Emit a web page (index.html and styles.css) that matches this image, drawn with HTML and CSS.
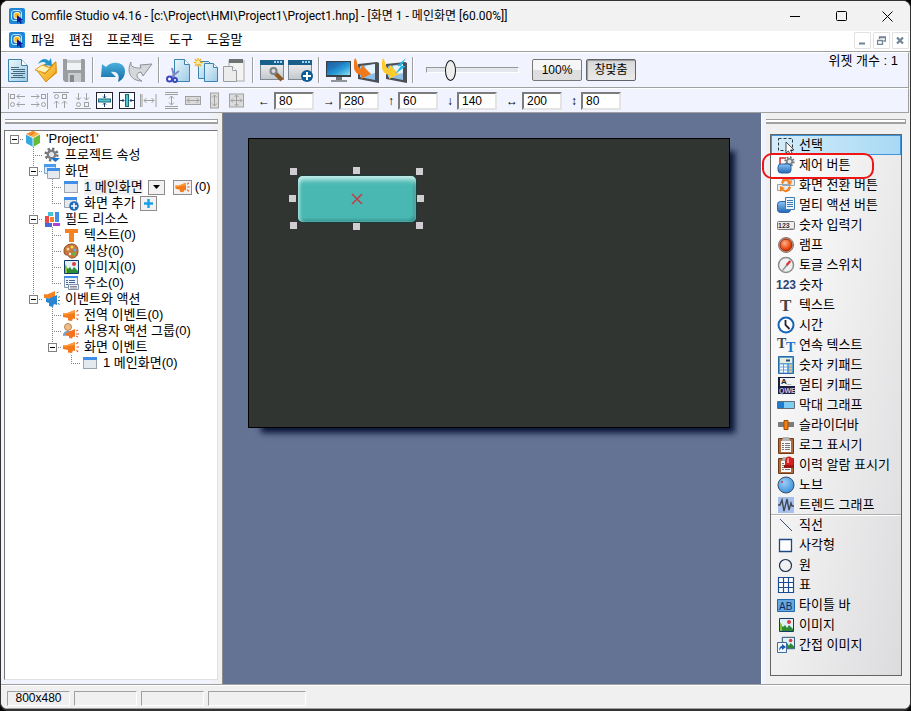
FILE: index.html
```html
<!DOCTYPE html>
<html lang="ko">
<head>
  <meta charset="UTF-8">
  <meta name="viewport" content="width=device-width, initial-scale=1.0">
  <title>Comfile Studio v4.16</title>
  <link rel="stylesheet" href="styles.css">
</head>
<body>
  <svg class="defs" aria-hidden="true">
    <defs>
      <linearGradient id="gPaper" x1="0" y1="0" x2="1" y2="1"><stop offset="0" stop-color="#eaf6fc"/><stop offset="1" stop-color="#9ccbe6"/></linearGradient>
      <linearGradient id="gGold" x1="0" y1="0" x2="1" y2="1"><stop offset="0" stop-color="#ffe27a"/><stop offset="1" stop-color="#f0a010"/></linearGradient>
      <linearGradient id="gGrey" x1="0" y1="0" x2="0" y2="1"><stop offset="0" stop-color="#f4f4f4"/><stop offset="1" stop-color="#c4c7ca"/></linearGradient>
      <linearGradient id="gBlue" x1="0" y1="0" x2="0" y2="1"><stop offset="0" stop-color="#8cc4f4"/><stop offset="1" stop-color="#2468b4"/></linearGradient>
      <linearGradient id="gUndo" x1="0" y1="0" x2="0" y2="1"><stop offset="0" stop-color="#4cb0dc"/><stop offset="1" stop-color="#0f6aa4"/></linearGradient>
      <linearGradient id="gScreen" x1="0" y1="0" x2="1" y2="1"><stop offset="0" stop-color="#0b4f9c"/><stop offset=".6" stop-color="#2a9bd8"/><stop offset="1" stop-color="#8fe0f8"/></linearGradient>
      <radialGradient id="gRed" cx=".4" cy=".35" r=".6"><stop offset="0" stop-color="#ffb080"/><stop offset="1" stop-color="#e03000"/></radialGradient>
      <radialGradient id="gKnob" cx=".4" cy=".35" r=".7"><stop offset="0" stop-color="#9ad0f8"/><stop offset="1" stop-color="#3c8cd8"/></radialGradient>
    </defs>
    <symbol id="app" viewBox="0 0 16 16"><rect width="16" height="16" rx="2" fill="#1d86d8"/><rect x="2.500" y="2.500" width="10" height="10" rx="2.500" fill="none" stroke="#bfe3fa"/><rect x="5" y="4.500" width="6" height="6" rx="2" fill="#ffb52a" stroke="#fff3c8"/><path d="M8 7l6 5-2.500.5 1.500 2.500-1.500.8-1.500-2.500L8 15z" fill="#0a1a8c"/></symbol>
    <symbol id="win" viewBox="0 0 16 16"><rect x="1.500" y="2.500" width="13" height="11" fill="#e4e9ee" stroke="#9aa4b0"/><path d="M1 2h14v3H1z" fill="#3f8fe8"/></symbol>
    <symbol id="horn" viewBox="0 0 16 16"><path d="M0 6l3 .5L12 3v9l-2-.5-1 2.500-4-.5V11L0 10z" fill="#f27a1a"/><path d="M0 6l3 .5L12 3v3L0 8z" fill="#ff9c3c"/><path d="M13.500 5l1.500-2M13.500 8H16M13.500 11l1.500 2" stroke="#e8501c" stroke-width="1.200"/></symbol>
    <symbol id="photo" viewBox="0 0 16 16"><path d="M1.500 1.500h14v13h-14z" fill="#dff0fb" stroke="#123a66"/><path d="M2 14V6l3 4 2-2 2 3 2-3 4 4v2z" fill="#2f8a34"/><path d="M2 5l2 3v6H2z" fill="#86c232"/><circle cx="11" cy="5" r="2" fill="#e03a3a"/></symbol>
    <symbol id="board" viewBox="0 0 18 18"><path d="M1.500 2.500h15v15h-15z" fill="#b06a3c" stroke="#6e3a1c"/><path d="M4 5h10v11H4z" fill="#f8f8f8"/><path d="M6 1h6l1 4H5z" fill="#b0b4b8"/><path d="M5 7.500h2M8 7.500h5M5 9.500h2M8 9.500h5M5 11.500h2M8 11.500h5M5 13.500h2M8 13.500h5" stroke="#777"/></symbol>
    <symbol id="gear" viewBox="0 0 16 16"><circle cx="8" cy="8" r="6" fill="none" stroke="#6e7276" stroke-width="3" stroke-dasharray="2.400 2.300"/><circle cx="8" cy="8" r="4" fill="#e8e8e8" stroke="#7c8084" stroke-width="2.500"/></symbol>
  </svg>

  <div class="window">
    <header class="titlebar">
      <svg class="icon16"><use href="#app"/></svg>
      <h1>Comfile Studio v4.16 - [c:\Project\HMI\Project1\Project1.hnp] - [화면 1 - 메인화면 [60.00%]]</h1>
      <button class="sys" aria-label="최소화"><svg width="11" height="11"><path d="M0 5.500h10" stroke="#000"/></svg></button>
      <button class="sys" aria-label="최대화"><svg width="11" height="11"><rect x=".5" y=".5" width="10" height="9" rx="1" fill="none" stroke="#000"/></svg></button>
      <button class="sys" aria-label="닫기"><svg width="11" height="11"><path d="M.5.5l10 10M10.500.5l-10 10" stroke="#000"/></svg></button>
    </header>

    <nav class="menubar">
      <svg class="icon16"><use href="#app"/></svg>
      <a href="#">파일</a>
      <a href="#">편집</a>
      <a href="#">프로젝트</a>
      <a href="#">도구</a>
      <a href="#">도움말</a>
      <div class="mdi">
        <button aria-label="창 최소화"><svg width="9" height="9"><path d="M1 7.500h6" stroke="#6f8399" stroke-width="2"/></svg></button>
        <button aria-label="창 복원"><svg width="9" height="9"><path d="M2.500 3V1h6v4H6.500M3 1.500h5M.5 4.500h5v4h-5zM.5 4.500h5" fill="none" stroke="#6f8399" stroke-width="1.300"/></svg></button>
        <button aria-label="창 닫기"><svg width="9" height="9"><path d="M1 1.500l6 6M7 1.500l-6 6" stroke="#6f8399" stroke-width="2.200"/></svg></button>
      </div>
    </nav>

    <div class="toolbar">
      <button class="tool" aria-label="새 프로젝트"><svg viewBox="0 0 25 25"><path d="M2.500 1.500h13l6 6v16h-19z" fill="url(#gPaper)" stroke="#3c84b0"/><path d="M15.500 1.500v6h6" fill="#fff" stroke="#3c84b0"/><path d="M5 9.500h8M5 11.500h14M7 13.500h12M5 15.500h14M7 17.500h10M5 19.500h14" stroke="#41687e"/></svg></button>
      <button class="tool" aria-label="열기"><svg viewBox="0 0 25 25"><path d="M2 12l8-6 5 3 7-6 1 12-11 9z" fill="#e89c10"/><path d="M2 11l9 5 11-12v10L12 24z" fill="url(#gGold)" stroke="#c88408" stroke-width=".7"/><path d="M1 12l7-5 8 3-5 5z" fill="#fff2b8" stroke="#e0a020"/><path d="M4 6C7 0 12 0 15 3l2-3 1 8-8-1 2-2C9 3 7 4 4 6z" fill="#1f94cc"/></svg></button>
      <button class="tool" aria-label="저장"><svg viewBox="0 0 25 25"><path d="M1 1h21l1 1v22H3l-2-2z" fill="#9b9ea1"/><path d="M5 1h14v11H5z" fill="#f1f2f3"/><path d="M5 2h14v3H5z" fill="#c9ccce"/><path d="M6 15h13v9H6z" fill="#c9cbcd"/><path d="M8 17h4v7H8z" fill="#85898c"/></svg></button>
      <span class="sep"></span>
      <button class="tool" aria-label="실행 취소"><svg viewBox="0 0 25 25"><path d="M2 6l4 3c6-7 19-5 19 4 0 6-3 9-7 11 2-6 0-11-7-10l5 5L1 19z" fill="url(#gUndo)"/></svg></button>
      <button class="tool" aria-label="다시 실행"><svg viewBox="0 0 25 25"><path d="M3 4C-2 14 3 23 14 23c-6-3-7-8-1-9l2 4 9-12-12 1 1 3C6 10 2 9 3 4z" fill="#d5d8da" stroke="#8d9295"/></svg></button>
      <span class="sep"></span>
      <button class="tool" aria-label="잘라내기"><svg viewBox="0 0 25 25"><path d="M8.500 1.500h10l5 5v17h-15z" fill="url(#gPaper)" stroke="#3c84b0"/><path d="M18.500 1.500v5h5" fill="#fff" stroke="#3c84b0"/><path d="M6 10l3 12M13 13L4 20" stroke="#8088c8" stroke-width="2"/><circle cx="3.500" cy="21" r="2.500" fill="#fff" stroke="#3c48c0" stroke-width="2"/><circle cx="9" cy="22" r="2" fill="#fff" stroke="#3c48c0" stroke-width="2"/></svg></button>
      <button class="tool" aria-label="복사"><svg viewBox="0 0 25 25"><path d="M4.500 3.500h10l4 4v13h-14z" fill="url(#gPaper)" stroke="#3c84b0"/><path d="M10.500 5.500h9l4 4v14h-13z" fill="url(#gPaper)" stroke="#3c84b0"/><path d="M19.500 5.500v4h4" fill="#fff" stroke="#3c84b0"/><path d="M4 0v9M0 4.500h9M1 1l6 7M7 1L1 8" stroke="#f0b020" stroke-width="1.300"/><circle cx="4" cy="4.500" r="2" fill="#fff0a0"/></svg></button>
      <button class="tool" aria-label="붙여넣기"><svg viewBox="0 0 25 25"><path d="M6 2h17v22H6z" fill="#cfcfcf"/><path d="M8 4h13v18H8z" fill="#f3f3f3"/><path d="M7 1h14v4H7z" fill="#6e7275"/><path d="M1.500 8.500h9l4 4v11h-13z" fill="#ececec" stroke="#9a9da0"/><path d="M10.500 8.500v4h4" fill="#fff" stroke="#9a9da0"/></svg></button>
      <span class="sep"></span>
      <button class="tool" aria-label="화면 속성"><svg viewBox="0 0 25 25"><rect x=".5" y="2.500" width="23" height="19" fill="url(#gGrey)" stroke="#7d8992"/><path d="M0 2h24v5H0z" fill="#185f8c"/><path d="M14 4h2M17 4h2M20 4h2" stroke="#9fd4f0" stroke-width="2"/><path d="M15 15l7 7" stroke="#8c5a24" stroke-width="4"/><circle cx="13.500" cy="13" r="3" fill="none" stroke="#7d8388" stroke-width="2"/></svg></button>
      <button class="tool" aria-label="화면 추가"><svg viewBox="0 0 25 25"><rect x=".5" y="2.500" width="23" height="19" fill="url(#gGrey)" stroke="#7d8992"/><path d="M0 2h24v5H0z" fill="#185f8c"/><path d="M14 4h2M17 4h2M20 4h2" stroke="#9fd4f0" stroke-width="2"/><circle cx="19" cy="18" r="6" fill="#0f5c94"/><path d="M19 14v8M15 18h8" stroke="#fff" stroke-width="2"/></svg></button>
      <span class="sep"></span>
      <button class="tool" aria-label="시뮬레이션"><svg viewBox="0 0 25 25"><path d="M0 3h25v16H0z" fill="#384048"/><path d="M1 4h23v13H1z" fill="url(#gScreen)"/><path d="M1 4h20L3 12z" fill="#2c70ae" opacity=".5"/><path d="M10 19h6v3h-6z" fill="#70767c"/><path d="M5 22h16v2H5z" fill="#8f9599"/></svg></button>
      <button class="tool" aria-label="다운로드"><svg viewBox="0 0 25 25"><path d="M4 6l19-2 2 1v20L4 21z" fill="#4a5056"/><path d="M6 8l15-2v16L6 19z" fill="#8fc0e8"/><path d="M11 8l10-2v9l-8 2z" fill="#e4f3fc"/><path d="M1 0c3 3 1 8 6 11l1-4 9 9-10 5v-4C0 16-2 8 1 0z" fill="#f07818"/></svg></button>
      <button class="tool" aria-label="빠른 다운로드"><svg viewBox="0 0 25 25"><path d="M4 6l19-2 2 1v20L4 21z" fill="#4a5056"/><path d="M6 8l15-2v16L6 19z" fill="#8fc0e8"/><path d="M11 8l10-2v9l-8 2z" fill="#e4f3fc"/><path d="M1 0c3 3 1 8 6 11l1-4 9 9-10 5v-4C0 16-2 8 1 0z" fill="#ffcc30"/><path d="M24 0l-9 8h4l-6 8 11-8h-5z" fill="#18b8e8"/></svg></button>
      <span class="sep"></span>
      <input class="zoom" type="range" min="0" max="100" value="22" aria-label="확대 비율">
      <button class="push">100%</button>
      <button class="push pressed">창맞춤</button>
      <span class="count">위젯 개수 : 1</span>
    </div>

    <div class="alignbar">
      <button class="align" aria-label="왼쪽 맞춤"><svg viewBox="0 0 18 18"><path d="M.5 1v16M9 4.500h8M9 12.500h8M11.500 2L9 4.500 11.500 7M11.500 10L9 12.500l2.500 2.500" /><rect x="2.500" y="2.500" width="4" height="4"/><circle cx="4.500" cy="12.500" r="2"/></svg></button>
      <button class="align" aria-label="오른쪽 맞춤"><svg viewBox="0 0 18 18"><path d="M17.500 1v16M1 4.500h8M1 12.500h8M6.500 2L9 4.500 6.500 7M6.500 10L9 12.500 6.500 15"/><rect x="11.500" y="2.500" width="4" height="4"/><circle cx="13.500" cy="12.500" r="2"/></svg></button>
      <button class="align" aria-label="위쪽 맞춤"><svg viewBox="0 0 18 18"><path d="M1 .5h16M4.500 9v7M12.500 9v7M2 11.500L4.500 9 7 11.500M10 11.500L12.500 9l2.500 2.500"/><circle cx="4.500" cy="4.500" r="2"/><rect x="10.500" y="2.500" width="4" height="4"/></svg></button>
      <button class="align" aria-label="아래쪽 맞춤"><svg viewBox="0 0 18 18"><path d="M1 16.500h16M4.500 1v7M12.500 1v7M2 5.500L4.500 8 7 5.500M10 5.500L12.500 8 15 5.500"/><circle cx="4.500" cy="12.500" r="2"/><rect x="10.500" y="10.500" width="4" height="4"/></svg></button>
      <button class="align on" aria-label="세로 가운데"><svg viewBox="0 0 18 18"><rect x=".5" y=".5" width="16" height="16" class="frame"/><path d="M8.500 2v4M8.500 15v-4M7 4.500L8.500 6 10 4.500M7 12.500L8.500 11l1.500 1.500"/><rect x="2.500" y="7" width="12" height="3" class="bar"/></svg></button>
      <button class="align on" aria-label="가로 가운데"><svg viewBox="0 0 18 18"><rect x="1.500" y=".5" width="15" height="16" class="frame"/><path d="M2 8.500h4M16 8.500h-4M4.500 7L6 8.500 4.500 10M13.500 7L12 8.500l1.500 1.500"/><rect x="7.500" y="2.500" width="3" height="12" class="bar"/></svg></button>
      <button class="align" aria-label="가로 간격"><svg viewBox="0 0 18 18"><path d="M2 2v13M16 2v13M.5 2v13M4 8.500h10M6.500 6L4 8.500 6.500 11M11.500 6L14 8.500 11.500 11"/></svg></button>
      <button class="align" aria-label="세로 간격"><svg viewBox="0 0 18 18"><path d="M3 .5h13M3 2.500h13M3 14.500h13M3 16.500h13M9.500 4v9M7 6.500L9.500 4 12 6.500M7 10.500L9.500 13l2.500-2.500"/></svg></button>
      <button class="align" aria-label="같은 너비"><svg viewBox="0 0 18 18"><rect x="1.500" y="4.500" width="15" height="8" class="dim"/><path d="M3 8.500h12M5.500 6L3 8.500 5.500 11M12.500 6L15 8.500 12.500 11"/></svg></button>
      <button class="align" aria-label="같은 높이"><svg viewBox="0 0 18 18"><rect x="4.500" y="1" width="8" height="15" class="dim"/><path d="M8.500 3v11M6 5.500L8.500 3 11 5.500M6 11.500L8.500 14l2.500-2.500"/></svg></button>
      <button class="align" aria-label="같은 크기"><svg viewBox="0 0 18 18"><rect x="1.500" y="2" width="14" height="13" class="dim"/><path d="M3 8.500h11M8.500 3v11M5 6.500l-2 2 2 2M12 6.500l2 2-2 2M6.500 5l2-2 2 2M6.500 12l2 2 2-2"/></svg></button>
      <div class="coords">
        <label>←<input type="text" value="80"></label>
        <label>→<input type="text" value="280"></label>
        <label>↑<input type="text" value="60"></label>
        <label>↓<input type="text" value="140"></label>
        <label>↔<input type="text" value="200"></label>
        <label>↕<input type="text" value="80"></label>
      </div>
    </div>

    <main class="workspace">
      <aside class="dock left">
        <div class="grip"></div>
        <div class="tree">
          <ul class="root">
            <li>
              <div class="row"><button class="toggle" aria-label="접기"></button><svg class="icon16" viewBox="0 0 16 16"><path d="M8 0l7 3-7 4-7-4z" fill="#ffb040"/><path d="M1 3l7 4v9l-7-4z" fill="#38a8e0"/><path d="M15 3L8 7v9l7-4z" fill="#68bc34"/><path d="M8 0L1 3l4 2.500 6-4z" fill="#f28a28"/><path d="M1 3l7 4 7-4M8 7v9" fill="none" stroke="#fff" stroke-width=".8"/></svg><span>'Project1'</span></div>
              <ul>
                <li><div class="row leaf"><svg class="icon16" viewBox="0 0 16 16"><use href="#gear" width="15" height="15"/><path d="M7 11h9l-4.500 4z" fill="#1272d0"/></svg><span>프로젝트 속성</span></div></li>
                <li>
                  <div class="row"><button class="toggle" aria-label="접기"></button><svg class="icon16" viewBox="0 0 16 16"><path d="M.5 1.500h11v9H.5z" fill="#dbeafa" stroke="#7da6d0"/><path d="M0 1h12v3H0z" fill="#4a9bf0"/><path d="M3.500 5.500h12v10h-12z" fill="#e4e9ee" stroke="#9aa4b0"/><path d="M3 5h13v3H3z" fill="#3f8fe8"/></svg><span>화면</span></div>
                  <ul>
                    <li><div class="row leaf"><svg class="icon16"><use href="#win"/></svg><span class="picked">1 메인화면</span><button class="mini drop" aria-label="화면 선택"><svg width="7" height="4"><path d="M0 0h7L3.500 4z"/></svg></button><button class="mini event" aria-label="이벤트"><svg width="15" height="14"><use href="#horn"/></svg></button><span>(0)</span></div></li>
                    <li><div class="row leaf"><svg class="icon16" viewBox="0 0 16 16"><path d="M1.500 2.500h12v10h-12z" fill="#e4e9ee" stroke="#9aa4b0"/><path d="M1 2h13v3H1z" fill="#3f8fe8"/><circle cx="11" cy="11" r="4.800" fill="#1f6cb8"/><path d="M11 8v6M8 11h6" stroke="#fff" stroke-width="1.600"/></svg><span>화면 추가</span><button class="mini add" aria-label="추가"><svg width="9" height="9"><path d="M4.500 0v9M0 4.500h9" stroke="#18a0e8" stroke-width="2.400"/></svg></button></div></li>
                  </ul>
                </li>
                <li>
                  <div class="row"><button class="toggle" aria-label="접기"></button><svg class="icon16" viewBox="0 0 16 16"><path d="M4 1h5v4H4z" fill="#48c0d8"/><path d="M1 5h4v7H1z" fill="#f04848"/><path d="M6 6h4v5H6z" fill="#f88030"/><path d="M11 1h4v10h-4z" fill="#4090e8"/><path d="M1 12h7v4H1z" fill="#4868d8"/><path d="M9 12h7v3H9z" fill="#b040d8"/></svg><span>필드 리소스</span></div>
                  <ul>
                    <li><div class="row leaf"><svg class="icon16" viewBox="0 0 16 16"><path d="M2 2h13v4h-4v9H6V6H2z" fill="#f58220"/></svg><span>텍스트(0)</span></div></li>
                    <li><div class="row leaf"><svg class="icon16" viewBox="0 0 16 16"><path d="M1 8c0-5 4-7 8-7s6 3 6 7-2 7-6 7-3-3-5-3-3-1-3-4z" fill="#c8783c" stroke="#8c4c20"/><circle cx="5" cy="6" r="1.500" fill="#f8d8a0"/><circle cx="9" cy="4" r="1.500" fill="#f0e050"/><circle cx="12" cy="7" r="1.500" fill="#60b0f0"/><circle cx="11" cy="11" r="1.700" fill="#50c050"/><circle cx="7" cy="11" r="1.200" fill="#f8f0e0"/></svg><span>색상(0)</span></div></li>
                    <li><div class="row leaf"><svg class="icon16"><use href="#photo"/></svg><span>이미지(0)</span></div></li>
                    <li><div class="row leaf"><svg class="icon16" viewBox="0 0 16 16"><path d="M1.500 1.500h13v11h-13z" fill="#eef3f8" stroke="#8494a8"/><path d="M1 1h14v2H1z" fill="#3f8fe8"/><path d="M3 5.500h2M6 5.500h6M3 7.500h2M6 7.500h6M3 9.500h2" stroke="#4864a0"/><path d="M5.500 9.500h10v5h-10z" fill="#f4f4f4" stroke="#8494a8"/><path d="M7 11.500h7M7 13h7" stroke="#889"/></svg><span>주소(0)</span></div></li>
                  </ul>
                </li>
                <li>
                  <div class="row"><button class="toggle" aria-label="접기"></button><svg class="icon16" viewBox="0 0 16 16"><path d="M0 3l3 .5L11 0v8L0 7z" fill="#f58220"/><path d="M2 7l3 .5L13 4v10l-3-1-1 3-4-1v-3l-3-1z" fill="#2a86d0"/><path d="M12.500 2l2-1M14 6.500l2-1M14 9.500h2M14 12l1.500 2" stroke="#389"/></svg><span>이벤트와 액션</span></div>
                  <ul>
                    <li><div class="row leaf"><svg class="icon16"><use href="#horn"/></svg><span>전역 이벤트(0)</span></div></li>
                    <li><div class="row leaf"><svg class="icon16" viewBox="0 0 16 16"><circle cx="5" cy="4" r="3.500" fill="#f0bc88" stroke="#b88450"/><path d="M0 13c0-4 2-5 5-5s4 1 4 4z" fill="#6ca4d8"/><path d="M3 10l9-4v8l-2-.5-1 2-3-.5v-2l-3-.5z" fill="#f27420"/><path d="M13 8l2-1M13 11h3M13 13l2 1" stroke="#e8501c"/></svg><span>사용자 액션 그룹(0)</span></div></li>
                    <li>
                      <div class="row"><button class="toggle" aria-label="접기"></button><svg class="icon16"><use href="#horn"/></svg><span>화면 이벤트</span></div>
                      <ul>
                        <li><div class="row leaf"><svg class="icon16"><use href="#win"/></svg><span>1 메인화면(0)</span></div></li>
                      </ul>
                    </li>
                  </ul>
                </li>
              </ul>
            </li>
          </ul>
        </div>
      </aside>

      <section class="desk">
        <div class="screen">
          <div class="widget">
            <svg width="12" height="12"><path d="M1 1l10 10M11 1L1 11" stroke="#c04048" stroke-width="1.600"/></svg>
            <i class="h nw"></i><i class="h n"></i><i class="h ne"></i>
            <i class="h w"></i><i class="h e"></i>
            <i class="h sw"></i><i class="h s"></i><i class="h se"></i>
          </div>
        </div>
      </section>

      <aside class="dock right">
        <div class="grip"></div>
        <div class="palette">
          <button class="item active"><svg viewBox="0 0 18 18"><path d="M1.500 2.500h14v12h-14z" fill="none" stroke="#333" stroke-dasharray="3 2"/><path d="M9 6v11l2.500-2 1.500 3 2-1-1.500-3H17z" fill="#fff" stroke="#222" stroke-width=".8"/></svg>선택</button>
          <button class="item marked"><svg viewBox="0 0 18 18"><path d="M3 8V2h6" fill="none" stroke="#e02020" stroke-width="1.500"/><use href="#gear" x="7" y="0" width="11" height="11"/><rect x="1" y="8" width="13" height="9" rx="3" fill="url(#gBlue)" stroke="#2864a8"/></svg>제어 버튼</button>
          <button class="item"><svg viewBox="0 0 18 18"><path d="M5.500 3.500h12v6h-12zM.5 8.500h12v6H.5z" fill="#e8edf2" stroke="#98a4b0"/><path d="M4 7c1-5 7-6 9-2l2-1-1 5-4-2 1-1c-2-2-4-1-5 2zM14 11c-1 5-6 7-9 3l-2 2V10l5 2-2 1c2 2 5 1 5-2z" fill="#f58220"/></svg>화면 전환 버튼</button>
          <button class="item"><svg viewBox="0 0 18 18"><rect x=".5" y="5.500" width="13" height="11" rx="3" fill="url(#gBlue)" stroke="#2864a8"/><path d="M8.500 1.500h9v12h-9z" fill="#f0f6fb" stroke="#3a7cb4"/><path d="M10 4.500h6M10 6.500h6M10 8.500h6M10 10.500h6" stroke="#3a7cb4"/></svg>멀티 액션 버튼</button>
          <button class="item"><svg viewBox="0 0 18 18"><rect x=".5" y="5.500" width="17" height="8" rx="1" fill="#eee" stroke="#777"/><text x="1" y="12" class="t-num">123_</text></svg>숫자 입력기</button>
          <button class="item"><svg viewBox="0 0 18 18"><circle cx="9" cy="9" r="7.500" fill="#b8b0a8" stroke="#8c7468"/><circle cx="9" cy="9" r="6" fill="url(#gRed)" stroke="#a02808"/></svg>램프</button>
          <button class="item"><svg viewBox="0 0 18 18"><circle cx="9" cy="9" r="7.500" fill="#f0f0f0" stroke="#8c8c8c" stroke-width="1.500"/><path d="M5 14L12 5l1 2-7 8z" fill="#999"/><path d="M9 8l4-4 1 2-4 4z" fill="#e03030"/></svg>토글 스위치</button>
          <button class="item"><svg viewBox="0 0 18 18"><text x="-1" y="13" class="t-123">123</text></svg>숫자</button>
          <button class="item"><svg viewBox="0 0 18 18"><text x="3" y="15" class="t-serif">T</text></svg>텍스트</button>
          <button class="item"><svg viewBox="0 0 18 18"><circle cx="9" cy="9" r="7.500" fill="#fff" stroke="#1464b8" stroke-width="2"/><path d="M8.500 4v5l4 4" fill="none" stroke="#223" stroke-width="1.800"/></svg>시간</button>
          <button class="item"><svg viewBox="0 0 18 18"><text x="0" y="12" class="t-serif small">T</text><text x="9" y="16" class="t-serif small blue">T</text></svg>연속 텍스트</button>
          <button class="item"><svg viewBox="0 0 18 18"><path d="M1.500.5h15v17h-15z" fill="#5ca0dc" stroke="#2a68a4"/><path d="M3 2h12v5H3z" fill="#e4f0dc"/><path d="M9 4.500h4" stroke="#446" stroke-width="2"/><path d="M3 9.500h3M7 9.500h3M3 12.500h3M7 12.500h3M3 15.500h3M7 15.500h3" stroke="#fff" stroke-width="2"/><path d="M12 9.500h3M12 12.500h3M12 15.500h3" stroke="#f8c860" stroke-width="2"/></svg>숫자 키패드</button>
          <button class="item"><svg viewBox="0 0 18 18"><path d="M1 1h17v17H1z" fill="#1c1c3c"/><path d="M3 2h15v8H3z" fill="#f2f2f2"/><text x="4" y="8" class="t-key">A_</text><text x="2" y="17" class="t-qwe">QWE</text></svg>멀티 키패드</button>
          <button class="item"><svg viewBox="0 0 18 18"><path d="M.5 5.500h17v7H.5z" fill="#7cccf4" stroke="#666c74"/><path d="M1 6h6v6H1z" fill="#1c7cd0"/></svg>막대 그래프</button>
          <button class="item"><svg viewBox="0 0 18 18"><path d="M1 6h16v5H1z" fill="#7c7c7c"/><path d="M7 4.500h4v9H7z" fill="#f88010" stroke="#a04c00"/></svg>슬라이더바</button>
          <button class="item"><svg><use href="#board"/></svg>로그 표시기</button>
          <button class="item"><svg viewBox="0 0 18 18"><use href="#board"/><path d="M8 10V5c0-6 8-6 8 0v5z" fill="#d82020"/><path d="M7 9h10v3H7z" fill="#981818"/><path d="M10 4c0-2 2-2 2-2v5h-2z" fill="#ff9090"/></svg>이력 알람 표시기</button>
          <button class="item"><svg viewBox="0 0 18 18"><circle cx="9" cy="9" r="8" fill="url(#gKnob)" stroke="#345070"/><circle cx="5" cy="6" r="1" fill="#d03030"/></svg>노브</button>
          <button class="item"><svg viewBox="0 0 18 18"><path d="M1 1h16v16H1z" fill="#a8c0ec"/><path d="M1 9h2l2-5 2 11 3-12 2 11 2-7 1 3h2" fill="none" stroke="#404858" stroke-width="1.400"/></svg>트렌드 그래프</button>
          <button class="item first-shape"><svg viewBox="0 0 18 18"><path d="M3 3l12 12" stroke="#34507c"/></svg>직선</button>
          <button class="item"><svg viewBox="0 0 18 18"><path d="M2.500 3.500h12v12h-12z" fill="#fff" stroke="#1c4888" stroke-width="1.300"/></svg>사각형</button>
          <button class="item"><svg viewBox="0 0 18 18"><circle cx="8.500" cy="9.500" r="6" fill="none" stroke="#1c3050" stroke-width="1.200"/></svg>원</button>
          <button class="item"><svg viewBox="0 0 18 18"><path d="M1.500 1.500h15v15h-15zM6.500 2v14M11.500 2v14M2 6.500h14M2 11.500h14" fill="#fff" stroke="#1c4c94" stroke-width="1.200"/></svg>표</button>
          <button class="item"><svg viewBox="0 0 18 18"><path d="M.5 3.500h17v12H.5z" fill="#68a8e0" stroke="#2468ac"/><text x="2" y="14" class="t-ab">AB</text></svg>타이틀 바</button>
          <button class="item"><svg><use href="#photo" x="1" y="1" width="16" height="16"/></svg>이미지</button>
          <button class="item"><svg viewBox="0 0 18 18"><use href="#photo" x="4" y="0" width="14" height="14"/><path d="M.5 6.500h9v10h-9z" fill="#f4f8fc" stroke="#3c6ca0"/><path d="M2 15c0-3 1-5 3-5V8l4 3-4 3v-2c-1 0-2 1-3 3z" fill="#1c5cb0"/></svg>간접 이미지</button>
        </div>
      </aside>
    </main>

    <footer class="statusbar">
      <span>800x480</span>
      <span></span>
      <span></span>
      <span class="wide"></span>
    </footer>
  </div>
</body>
</html>
```
FILE: styles.css
```css
*, *::after {
  box-sizing: border-box;
}
body {
  margin: 0;
  background: #000;
  color: #000;
  font-family: "Liberation Sans", "Noto Sans CJK KR", sans-serif;
  font-size: 13px;
  line-height: 16px;
}
button, input {
  margin: 0;
  padding: 0;
  font: inherit;
  color: inherit;
}
button {
  border: 0;
  background: none;
}
svg {
  display: block;
  flex: none;
}
ul {
  margin: 0;
  padding: 0;
  list-style: none;
}
.defs {
  position: absolute;
  width: 0;
  height: 0;
}
.icon16 {
  width: 16px;
  height: 16px;
}
.window {
  display: flex;
  flex-direction: column;
  min-height: 100vh;
  border: 1px solid #333;
  border-bottom-width: 2px;
  border-radius: 8px;
  background: #f0f0f0;
  overflow: hidden;
}

/* title and menu */
.titlebar {
  display: flex;
  align-items: center;
  height: 30px;
  padding-left: 8px;
  background: #f2f2f2;
}
.titlebar h1 {
  flex: 1;
  margin: 0 0 0 6px;
  font: 12px/16px Roboto, "Noto Sans CJK KR", sans-serif;
  white-space: nowrap;
}
.sys {
  display: flex;
  justify-content: center;
  width: 46px;
}
.menubar {
  display: flex;
  align-items: center;
  gap: 14px;
  height: 21px;
  padding: 0 1px 2px 8px;
  border-bottom: 1px solid #a0a0a0;
  background: #fff;
}
.menubar a {
  color: #000;
  text-decoration: none;
}
.menubar .icon16 {
  margin-right: -8px;
}
.mdi {
  display: flex;
  gap: 2px;
  margin-left: auto;
}
.mdi button {
  display: flex;
  align-items: center;
  justify-content: center;
  width: 17px;
  height: 17px;
  border: 1px solid #e2e2e2;
  border-radius: 1px;
}

/* toolbars */
.toolbar, .alignbar {
  display: flex;
  align-items: center;
  margin-right: 1px;
  border-top: 1px solid #fff;
  border-right: 1px solid #a0a0a0;
  border-bottom: 1px solid #a0a0a0;
  background: #f1f4fe;
}
.toolbar {
  gap: 3px;
  height: 36px;
  padding: 0 10px 0 5px;
}
.tool {
  width: 25px;
  height: 25px;
}
.tool svg {
  width: 25px;
  height: 25px;
}
.sep {
  width: 2px;
  height: 26px;
  margin: 0 3px 0 2px;
  border-left: 1px solid #a0a0a0;
  background: #fff;
}
.zoom {
  width: 93px;
  height: 22px;
  margin: 0 10px 0 6px;
  appearance: none;
  background: none;
}
.zoom::-webkit-slider-runnable-track {
  height: 6px;
  border: 1px solid #999;
  border-right-color: #fff;
  border-bottom-color: #fff;
  background: #e4e6ee;
}
.zoom::-webkit-slider-thumb {
  width: 11px;
  height: 21px;
  margin-top: -8px;
  appearance: none;
  border: 1px solid #111;
  border-radius: 50%;
  background: #eee;
}
.push {
  width: 50px;
  height: 22px;
  margin-right: 1px;
  border: 1px solid #777;
  border-radius: 2px;
  background: linear-gradient(#f6f6f6 50%, #dedede 50%);
  font-size: 12px;
}
.push.pressed {
  border-color: #606468;
  background: linear-gradient(#d8d8d8, #eaeaea);
  box-shadow: inset 1px 1px 1px #999;
}
.count {
  align-self: flex-start;
  margin-left: auto;
}
.alignbar {
  gap: 4px;
  height: 25px;
  padding-left: 7px;
}
.align {
  width: 18px;
  height: 18px;
}
.align svg {
  width: 18px;
  height: 18px;
  fill: none;
  stroke: #a0a0a0;
}
.align .dim {
  fill: #dcdcdc;
}
.align.on svg {
  stroke: #183c78;
}
.align .frame {
  fill: #fff;
  stroke: #223;
}
.align .bar {
  fill: #54c4d0;
  stroke: #18687c;
}
.coords {
  display: flex;
  gap: 9px;
  margin-left: 8px;
  font-size: 12px;
}
.coords label {
  display: flex;
  align-items: center;
  gap: 4px;
}
.coords input {
  width: 40px;
  height: 18px;
  padding: 0 3px;
  border: 2px solid #e4e4e4;
  border-top-color: #7c7c7c;
  border-left-color: #7c7c7c;
  background: #fff;
}

/* workspace */
.workspace {
  display: grid;
  grid-template-columns: 222px minmax(0, 1fr) 149px;
  flex: 1;
}
.dock {
  display: flex;
  flex-direction: column;
  padding: 6px 4px 4px;
  background: linear-gradient(to right, #f1f4fe 94%, #f0f0f0 98%);
}
.dock.left {
  border-right: 1px solid #8c8c8c;
}
.dock.right {
  padding-bottom: 8px;
  border-left: 1px solid #fff;
  background: linear-gradient(to right, #f1f4fe 3px, #f0f0f0 4px);
}
.grip {
  height: 5px;
  border-top: 1px solid #a0a0a0;
  border-right: 1px solid #a0a0a0;
  border-bottom: 2px double #a0a0a0;
  background: #fff;
}
.tree {
  flex: 1;
  margin: 6px 0 0 -1px;
  border: 1px solid #e0e0e0;
  border-top-color: #777;
  border-left-color: #777;
  background: #fff;
}
.tree li {
  background: repeating-linear-gradient(#808080 0 1px, #fff 1px 2px) 9px 0 / 1px 100% no-repeat;
}
.tree li:last-child {
  background-size: 1px 9px;
}
.tree .root > li {
  background: none;
}
.tree ul ul {
  margin-left: 19px;
}
.row {
  display: flex;
  align-items: center;
  height: 16px;
  background: repeating-linear-gradient(to right, #808080 0 1px, #fff 1px 2px) 9px 8px / 10px 1px no-repeat;
  white-space: nowrap;
}
.row.leaf {
  padding-left: 20px;
}
.row .icon16 {
  margin-right: 5px;
}
.toggle {
  width: 9px;
  height: 9px;
  margin: 0 6px 0 5px;
  border: 1px solid #808080;
  background: linear-gradient(#000, #000) center / 5px 1px no-repeat #fff;
}
.picked {
  background: #f0f0f0;
}
.mini {
  display: flex;
  align-items: center;
  justify-content: center;
  width: 17px;
  height: 15px;
  margin-left: 5px;
  border: 1px solid #8c8c8c;
  background: #f2f2f2;
}
.mini.event {
  width: 19px;
  margin: 0 3px 0 8px;
}
.desk {
  padding: 25px;
  background: #647394;
}
.screen {
  position: relative;
  width: 482px;
  height: 290px;
  border: 1px solid #000;
  background: #303531;
  box-shadow: 9px 9px 6px -4px #0a1638;
}
.widget {
  position: absolute;
  left: 49px;
  top: 37px;
  display: flex;
  align-items: center;
  justify-content: center;
  width: 118px;
  height: 46px;
  border-radius: 5px;
  background: #4ab8b2;
  box-shadow: 0 0 0 1px #1c3a38, inset 0 5px 5px -1px #c4ece8, inset 2px 0 3px #8cd4d0, inset -2px -2px 3px #2a8480;
}
.h {
  position: absolute;
  width: 7px;
  height: 7px;
  background: #d0cdd2;
}
.nw, .ne { top: -8px; }
.sw, .se { bottom: -7px; }
.nw, .sw { left: -8px; }
.ne, .se { right: -7px; }
.n, .s { left: 55px; }
.n { top: -9px; }
.s { bottom: -8px; }
.w, .e { top: 19px; }
.w { left: -9px; }
.e { right: -8px; }

/* widget palette */
.palette {
  flex: 1;
  width: 132px;
  margin: 10px 0 0 4px;
  border: 1px solid #646464;
  background: linear-gradient(100deg, #fff, #dcdcde);
}
.item {
  position: relative;
  display: flex;
  align-items: center;
  gap: 4px;
  width: 100%;
  height: 20px;
  padding: 0 0 1px 6px;
  white-space: nowrap;
}
.item svg {
  width: 18px;
  height: 18px;
  overflow: visible;
}
.item.active {
  background: linear-gradient(to right, #d4eefb, #a8d8f4);
  box-shadow: inset 0 0 0 1px #3c94dc;
}
.item.marked::after {
  content: "";
  position: absolute;
  left: -9px;
  top: -2px;
  width: 112px;
  height: 26px;
  border: 2px solid #f01414;
  border-radius: 10px;
  z-index: 1;
}
.item.first-shape {
  box-shadow: 0 -1px #b0b0b0, inset 0 1px #fff;
}
.t-num { font-size: 7px; font-weight: bold; fill: #333; }
.t-123 { font-size: 12px; font-weight: bold; fill: #2c4474; }
.t-serif { font: bold 17px "Liberation Serif", serif; fill: #444; }
.t-serif.small { font-size: 14px; }
.t-serif.blue { fill: #1c74cc; }
.t-key { font-size: 8px; font-weight: bold; fill: #222; }
.t-qwe { font-size: 7px; font-weight: bold; fill: #c8c8f0; }
.t-ab { font-size: 10px; fill: #0c2c64; }

/* status bar */
.statusbar {
  display: flex;
  gap: 4px;
  height: 25px;
  padding: 6px 6px 2px;
  border-top: 1px solid #a0a0a0;
  border-bottom: 1px solid #a0a0a0;
  box-shadow: inset 0 1px #fff;
  font-size: 12px;
  line-height: 12px;
}
.statusbar span {
  width: 63px;
  border: 1px solid #fff;
  border-top-color: #a0a0a0;
  border-left-color: #a0a0a0;
  text-align: center;
}
.statusbar .wide {
  width: 98px;
}
```
